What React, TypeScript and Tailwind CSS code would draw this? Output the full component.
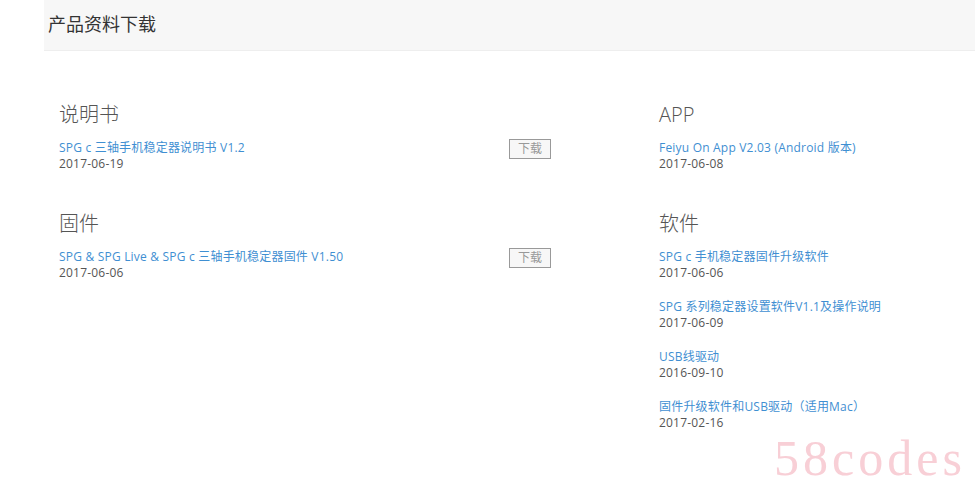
const font = "font-['Open_Sans','Noto_Sans_CJK_SC',sans-serif]";

type Item = { title: string; date: string; download?: boolean };

const left: { heading: string; items: Item[] }[] = [
  {
    heading: "说明书",
    items: [{ title: "SPG c 三轴手机稳定器说明书 V1.2", date: "2017-06-19", download: true }],
  },
  {
    heading: "固件",
    items: [
      { title: "SPG & SPG Live & SPG c 三轴手机稳定器固件 V1.50", date: "2017-06-06", download: true },
    ],
  },
];

const right: { heading: string; items: Item[] }[] = [
  {
    heading: "APP",
    items: [{ title: "Feiyu On App V2.03 (Android 版本)", date: "2017-06-08" }],
  },
  {
    heading: "软件",
    items: [
      { title: "SPG c 手机稳定器固件升级软件", date: "2017-06-06" },
      { title: "SPG 系列稳定器设置软件V1.1及操作说明", date: "2017-06-09" },
      { title: "USB线驱动", date: "2016-09-10" },
      { title: "固件升级软件和USB驱动（适用Mac）", date: "2017-02-16" },
    ],
  },
];

function Section({ heading, items }: { heading: string; items: Item[] }) {
  return (
    <div>
      <h3 className="text-[20px] font-light leading-[30px] text-[#555]">{heading}</h3>
      <div className="mt-[10px] flex flex-col gap-[18px]">
        {items.map((it) => (
          <div key={it.title} className="flex items-start justify-between">
            <div className="text-[12px] leading-[16px] tracking-[0.2px]">
              <a className="block text-[#3f8fd2]">{it.title}</a>
              <div className="text-[#555]">{it.date}</div>
            </div>
            {it.download && (
              <button className="-mt-px h-[20px] w-[42px] border border-[#999] bg-[#f7f7f7] text-[12px] leading-[18px] text-[#999]">
                下载
              </button>
            )}
          </div>
        ))}
      </div>
    </div>
  );
}

export default function App() {
  return (
    <div className={`relative h-[491px] w-[975px] overflow-hidden bg-white ${font}`}>
      <div className="ml-[44px] flex h-[51px] items-center border-b border-[#eeeeee] bg-[#f7f7f7] pl-[4px] pb-[2px]">
        <h2 className="text-[18px] text-[#333]">产品资料下载</h2>
      </div>
      <div className="flex pl-[59px] pt-[49px]">
        <div className="flex w-[492px] flex-col gap-[37px]">
          {left.map((s) => (
            <Section key={s.heading} {...s} />
          ))}
        </div>
        <div className="ml-[108px] flex w-[280px] flex-col gap-[37px]">
          {right.map((s) => (
            <Section key={s.heading} {...s} />
          ))}
        </div>
      </div>
      {/* watermark */}
      <div className="absolute left-[774px] top-[433px] font-['Liberation_Serif',serif] text-[50px] leading-none tracking-[4px] text-[#f8cfd6]">
        58codes
      </div>
    </div>
  );
}
